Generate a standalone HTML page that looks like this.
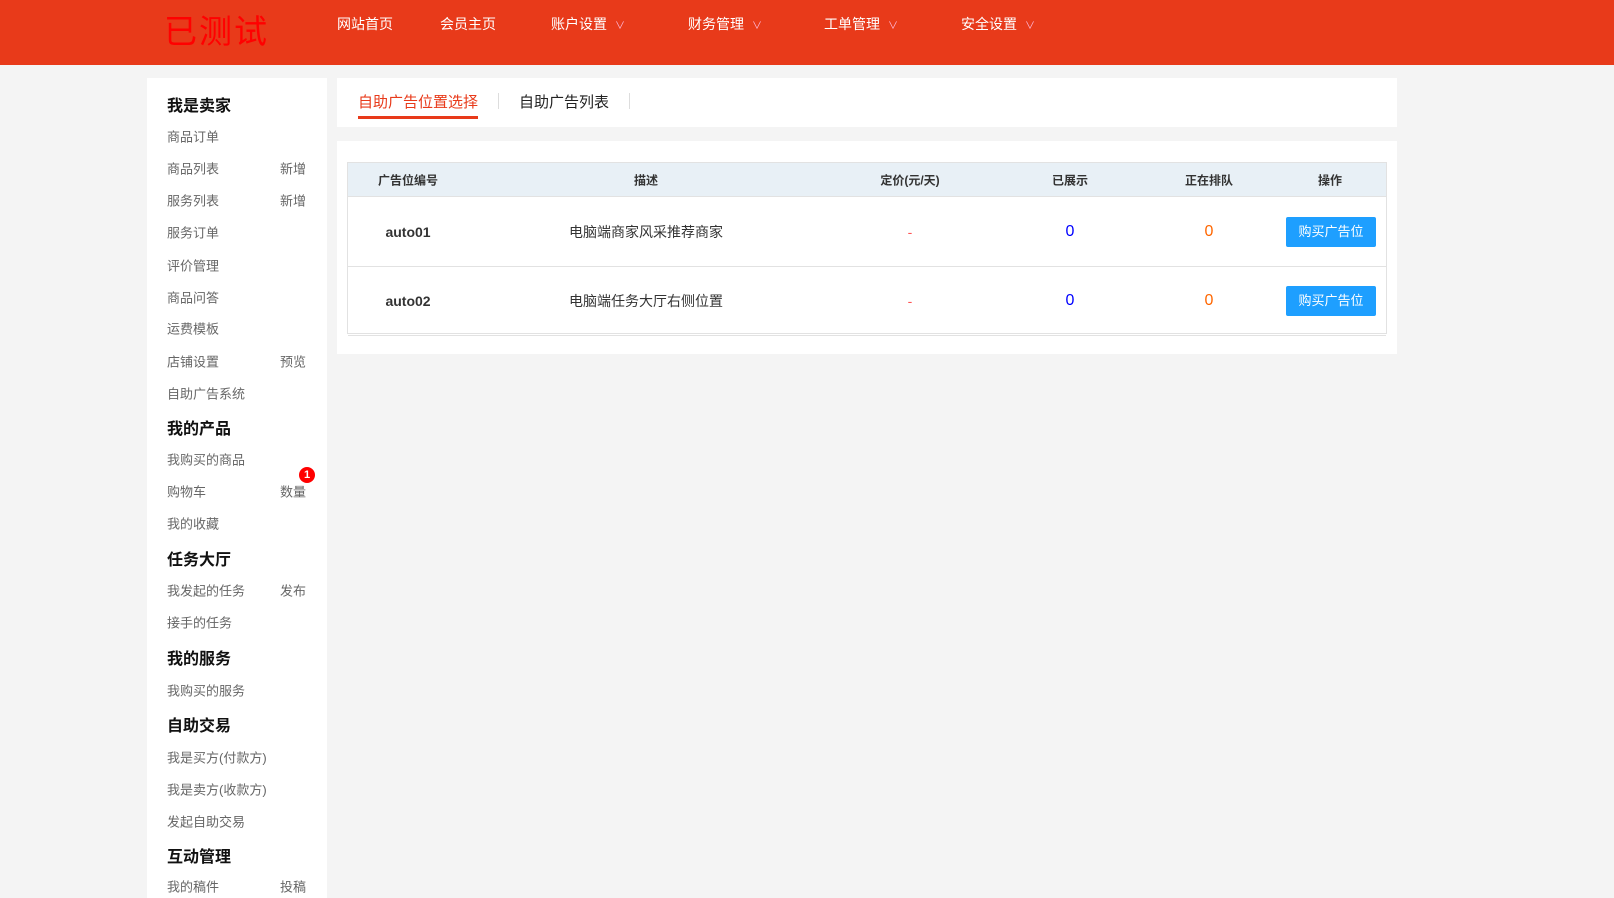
<!DOCTYPE html>
<html><head><meta charset="utf-8">
<style>
*{margin:0;padding:0;box-sizing:border-box}
body{width:1614px;height:891px;overflow:hidden;background:#f4f4f4;font-family:"Liberation Sans","Noto Sans CJK SC",sans-serif;position:relative}
.hd{position:absolute;left:0;top:0;width:1614px;height:65px;background:#e83a1a}
.logo{position:absolute;left:164px;top:5px;font-size:33px;color:#ff0000;letter-spacing:2px}
.nav{position:absolute;top:14px;color:#fff;font-size:14px}
.nav i{font-style:normal;font-size:10px;margin-left:8px;color:#fbd}
.side{position:absolute;left:147px;top:78px;width:180px;height:820px;background:#fff}
.s{position:absolute;left:20px;font-size:13px;color:#666;transform:translateY(-50%)}
.s.h{font-size:16px;font-weight:bold;color:#111}
.r{position:absolute;right:21px;font-size:13px;color:#666;transform:translateY(-50%)}
.badge{position:absolute;left:152px;top:389px;width:16px;height:16px;border-radius:50%;background:#f00;color:#fff;font-size:11px;font-weight:bold;text-align:center;line-height:16px}
.tabs{position:absolute;left:337px;top:78px;width:1060px;height:49px;background:#fff}
.t1{position:absolute;left:21px;top:13px;font-size:15px;color:#e83a1a;padding-bottom:4px;border-bottom:3px solid #e83a1a}
.t2{position:absolute;left:182px;top:13px;font-size:15px;color:#222}
.sep{position:absolute;top:15px;width:1px;height:16px;background:#ddd}
.panel{position:absolute;left:337px;top:141px;width:1060px;height:213px;background:#fff}
.tbl{position:absolute;left:10px;top:21px;width:1040px;height:172px;border:1px solid #e2e2e2}
.th{position:absolute;left:0;top:0;width:1038px;height:34px;background:#e8f0f6;border-bottom:1px solid #e2e2e2}
.row{position:absolute;left:0;width:1038px;height:69px;border-bottom:1px solid #e2e2e2}
.c{position:absolute;transform:translate(-50%,-50%);white-space:nowrap}
.th .c{top:17px;font-size:12px;font-weight:bold;color:#333}
.row .c{top:34px;font-size:14px;color:#333}
.row .btn{background:#1e9fff;color:#fff;font-size:13px;width:90px;height:30px;line-height:30px;text-align:center;border-radius:2px}
</style></head><body>
<div class="hd">
<div class="logo">已测试</div>
<div class="nav" style="left:337px">网站首页</div>
<div class="nav" style="left:440px">会员主页</div>
<div class="nav" style="left:551px">账户设置<i>∨</i></div>
<div class="nav" style="left:688px">财务管理<i>∨</i></div>
<div class="nav" style="left:824px">工单管理<i>∨</i></div>
<div class="nav" style="left:961px">安全设置<i>∨</i></div>
</div>
<div class="side">
<div class="s h" style="top:26px">我是卖家</div>
<div class="s" style="top:58px">商品订单</div>
<div class="s" style="top:90px">商品列表</div><div class="r" style="top:90px">新增</div>
<div class="s" style="top:122px">服务列表</div><div class="r" style="top:122px">新增</div>
<div class="s" style="top:154px">服务订单</div>
<div class="s" style="top:187px">评价管理</div>
<div class="s" style="top:219px">商品问答</div>
<div class="s" style="top:250px">运费模板</div>
<div class="s" style="top:283px">店铺设置</div><div class="r" style="top:283px">预览</div>
<div class="s" style="top:315px">自助广告系统</div>
<div class="s h" style="top:349px">我的产品</div>
<div class="s" style="top:381px">我购买的商品</div>
<div class="s" style="top:413px">购物车</div><div class="r" style="top:413px">数量</div>
<div class="badge">1</div>
<div class="s" style="top:445px">我的收藏</div>
<div class="s h" style="top:480px">任务大厅</div>
<div class="s" style="top:512px">我发起的任务</div><div class="r" style="top:512px">发布</div>
<div class="s" style="top:544px">接手的任务</div>
<div class="s h" style="top:579px">我的服务</div>
<div class="s" style="top:612px">我购买的服务</div>
<div class="s h" style="top:646px">自助交易</div>
<div class="s" style="top:679px">我是买方(付款方)</div>
<div class="s" style="top:711px">我是卖方(收款方)</div>
<div class="s" style="top:743px">发起自助交易</div>
<div class="s h" style="top:777px">互动管理</div>
<div class="s" style="top:808px">我的稿件</div><div class="r" style="top:808px">投稿</div>
</div>
<div class="tabs">
<div class="t1">自助广告位置选择</div>
<div class="sep" style="left:161px"></div>
<div class="t2">自助广告列表</div>
<div class="sep" style="left:292px"></div>
</div>
<div class="panel"><div class="tbl">
<div class="th">
<div class="c" style="left:60px">广告位编号</div>
<div class="c" style="left:298px">描述</div>
<div class="c" style="left:562px">定价(元/天)</div>
<div class="c" style="left:722px">已展示</div>
<div class="c" style="left:861px">正在排队</div>
<div class="c" style="left:982px">操作</div>
</div>
<div class="row" style="top:35px">
<div class="c" style="left:60px;font-weight:bold;font-size:14px">auto01</div>
<div class="c" style="left:298px">电脑端商家风采推荐商家</div>
<div class="c" style="left:562px;color:#f55">-</div>
<div class="c" style="left:722px;color:#00f;font-size:16px">0</div>
<div class="c" style="left:861px;color:#f60;font-size:16px">0</div>
<div class="c btn" style="left:983px">购买广告位</div>
</div>
<div class="row" style="top:104px">
<div class="c" style="left:60px;font-weight:bold;font-size:14px">auto02</div>
<div class="c" style="left:298px">电脑端任务大厅右侧位置</div>
<div class="c" style="left:562px;color:#f55">-</div>
<div class="c" style="left:722px;color:#00f;font-size:16px">0</div>
<div class="c" style="left:861px;color:#f60;font-size:16px">0</div>
<div class="c btn" style="left:983px">购买广告位</div>
</div>
</div></div>
</body></html>
